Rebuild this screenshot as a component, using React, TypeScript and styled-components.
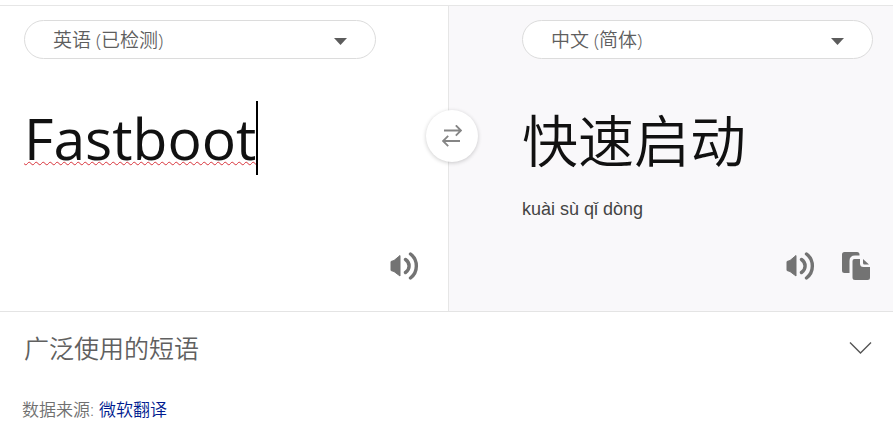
import React, { useState } from "react";
import styled, { createGlobalStyle } from "styled-components";

const GlobalStyle = createGlobalStyle`
  *, *::before, *::after { box-sizing: border-box; }
  body {
    margin: 0;
    background: #fff;
    color: #666;
    font-family: "Open Sans", "Noto Sans CJK SC", sans-serif;
  }
  button, select, input { font-family: inherit; }
`;

const Page = styled.main`
  padding-top: 5px;
`;

const Translator = styled.section`
  position: relative;
  display: grid;
  grid-template-columns: 449fr 444fr;
  min-height: 307px;
  border-top: 1px solid #e6e6e6;
  border-bottom: 1px solid #e4e4e4;
`;

const Panel = styled.div<{ $side: "source" | "target" }>`
  display: flex;
  flex-direction: column;
  min-width: 0;
  padding: ${(p) => (p.$side === "source" ? "14px 72px 0 24px" : "14px 20px 0 73px")};
  background: ${(p) => (p.$side === "source" ? "#fff" : "#f9f8fa")};
  border-right: ${(p) => (p.$side === "source" ? "1px solid #e6e6e6" : "0")};
`;

const SelectPill = styled.div`
  position: relative;
  height: 39px;
`;

const LanguageSelect = styled.select`
  appearance: none;
  width: 100%;
  height: 100%;
  padding: 0 60px 0 28px;
  border: 1px solid #dcdcdc;
  border-radius: 20px;
  background: #fff;
  color: #5e5e5e;
  font-size: 19px;
  font-weight: 350;
  outline: 0;
`;

const SelectArrow = styled.svg`
  position: absolute;
  right: 29px;
  top: 18px;
  width: 13px;
  height: 7px;
  fill: #5c5c5c;
  pointer-events: none;
`;

const TextRow = styled.div`
  display: flex;
  align-items: center;
  height: 74px;
  margin-top: 42px;
`;

const SourceInput = styled.input`
  field-sizing: content;
  min-width: 1px;
  max-width: 100%;
  height: 74px;
  padding: 0;
  border: 0;
  outline: 0;
  background: transparent;
  color: #111;
  caret-color: transparent;
  font-size: 57px;
  line-height: 74px;
  text-decoration: underline wavy #d8323a 1px;
  text-decoration-skip-ink: none;
  text-underline-offset: 1px;
`;

const Caret = styled.span`
  flex: none;
  width: 2px;
  height: 74px;
  background: #000;
`;

const Translation = styled.p`
  margin: 0;
  color: #111;
  font-family: "Noto Sans CJK SC", sans-serif;
  font-size: 56px;
  font-weight: 350;
  line-height: 74px;
  white-space: nowrap;
`;

const Pinyin = styled.p`
  margin: 22px 0 0;
  color: #444;
  font-family: "Liberation Sans", Arial, sans-serif;
  font-size: 18px;
  line-height: 24px;
`;

const Actions = styled.div<{ $side: "source" | "target" }>`
  display: flex;
  justify-content: flex-end;
  gap: 27px;
  margin: auto ${(p) => (p.$side === "source" ? "-43px" : "2px")} 31px 0;
`;

const IconButton = styled.button`
  display: flex;
  padding: 0;
  border: 0;
  background: none;
  color: #737373;
  cursor: pointer;
`;

const SwapButton = styled(IconButton)`
  position: absolute;
  left: calc(449 / 893 * 100% + 3px);
  top: 130px;
  width: 52px;
  height: 52px;
  align-items: center;
  justify-content: center;
  transform: translate(-50%, -50%);
  border-radius: 50%;
  background: #fff;
  box-shadow: 0 1px 4px rgba(0, 0, 0, 0.2);
  color: #858585;
`;

const PhrasesHeader = styled.button`
  display: flex;
  align-items: center;
  justify-content: space-between;
  width: 100%;
  height: 72px;
  padding: 0 21px 0 24px;
  border: 0;
  background: none;
  color: #606060;
  text-align: left;
  cursor: pointer;
`;

const PhrasesTitle = styled.span`
  font-size: 25px;
  font-weight: 350;
  line-height: 36px;
`;

const Source = styled.footer`
  display: flex;
  gap: 5px;
  padding: 13px 22px 20px;
  color: #707070;
  font-size: 17px;
  font-weight: 350;
  line-height: 26px;
`;

const SourceLink = styled.a`
  color: #001b90;
  text-decoration: none;
`;

const SpeakerIcon = () => (
  <svg width="30" height="28" viewBox="0 0 30 28" aria-hidden="true">
    <path
      d="M2 9.5 L5 8.5 L11 3.5 V24 L5 19.5 L2 18.5 Z"
      fill="currentColor"
      stroke="currentColor"
      strokeWidth="1"
      strokeLinejoin="round"
    />
    <path
      d="M16.5 7.5 C21.3 10.7 21.3 17.3 16.5 20.5 M21.5 2 C29.3 8 29.3 20 21.5 26"
      fill="none"
      stroke="currentColor"
      strokeWidth="3.4"
      strokeLinecap="round"
    />
  </svg>
);

const CopyIcon = () => (
  <svg width="29" height="28" viewBox="0 0 29 28" fill="currentColor" aria-hidden="true">
    <path d="M2.5 0 H15 Q17.5 0 17.5 2.5 V3.5 H13 Q7.5 3.5 7.5 9 V21 H2.5 Q0 21 0 18.5 V2.5 Q0 0 2.5 0 Z" />
    <path d="M12.5 7 H18 V11.5 Q18 15 21.5 15 H28 V25.5 Q28 28 25.5 28 H13 Q10.5 28 10.5 25.5 V9 Q10.5 7 12.5 7 Z" />
    <path d="M21 7 L27 12.5 H22.5 Q21 12.5 21 11 Z" />
  </svg>
);

const SwapIcon = () => (
  <svg
    width="20"
    height="22"
    viewBox="0 0 20 22"
    fill="none"
    stroke="currentColor"
    strokeWidth="1.8"
    aria-hidden="true"
  >
    <path d="M2 5.5 H19 M13.8 0.3 L19 5.5 L13.8 10.7" />
    <path d="M18 16 H1 M6.2 10.8 L1 16 L6.2 21.2" />
  </svg>
);

const ChevronIcon = () => (
  <svg width="23" height="14" viewBox="0 0 23 14" fill="none" stroke="#555" strokeWidth="1.4" aria-hidden="true">
    <path d="M1 1.5 L11.5 12 L22 1.5" />
  </svg>
);

interface LanguagePickerProps {
  label: string;
  options: string[];
}

const LanguagePicker = ({ label, options }: LanguagePickerProps) => (
  <SelectPill>
    <LanguageSelect aria-label={label} defaultValue={options[0]}>
      {options.map((option) => (
        <option key={option}>{option}</option>
      ))}
    </LanguageSelect>
    <SelectArrow viewBox="0 0 13 7" aria-hidden="true">
      <path d="M0 0 H13 L6.5 7 Z" />
    </SelectArrow>
  </SelectPill>
);

export default function App() {
  const [text, setText] = useState("Fastboot");

  return (
    <>
      <GlobalStyle />
      <Page>
        <Translator>
          <Panel $side="source">
            <LanguagePicker label="源语言" options={["英语 (已检测)"]} />
            <TextRow>
              <SourceInput
                aria-label="输入文本"
                spellCheck={false}
                value={text}
                onChange={(e) => setText(e.target.value)}
              />
              <Caret />
            </TextRow>
            <Actions $side="source">
              <IconButton aria-label="朗读原文">
                <SpeakerIcon />
              </IconButton>
            </Actions>
          </Panel>
          <Panel $side="target">
            <LanguagePicker label="目标语言" options={["中文 (简体)"]} />
            <TextRow>
              <Translation lang="zh-CN">快速启动</Translation>
            </TextRow>
            <Pinyin>kuài sù qǐ dòng</Pinyin>
            <Actions $side="target">
              <IconButton aria-label="朗读译文">
                <SpeakerIcon />
              </IconButton>
              <IconButton aria-label="复制">
                <CopyIcon />
              </IconButton>
            </Actions>
          </Panel>
          <SwapButton aria-label="交换语言">
            <SwapIcon />
          </SwapButton>
        </Translator>
        <PhrasesHeader aria-expanded={false}>
          <PhrasesTitle>广泛使用的短语</PhrasesTitle>
          <ChevronIcon />
        </PhrasesHeader>
        <Source>
          <span>数据来源:</span>
          <SourceLink href="#translator">微软翻译</SourceLink>
        </Source>
      </Page>
    </>
  );
}
